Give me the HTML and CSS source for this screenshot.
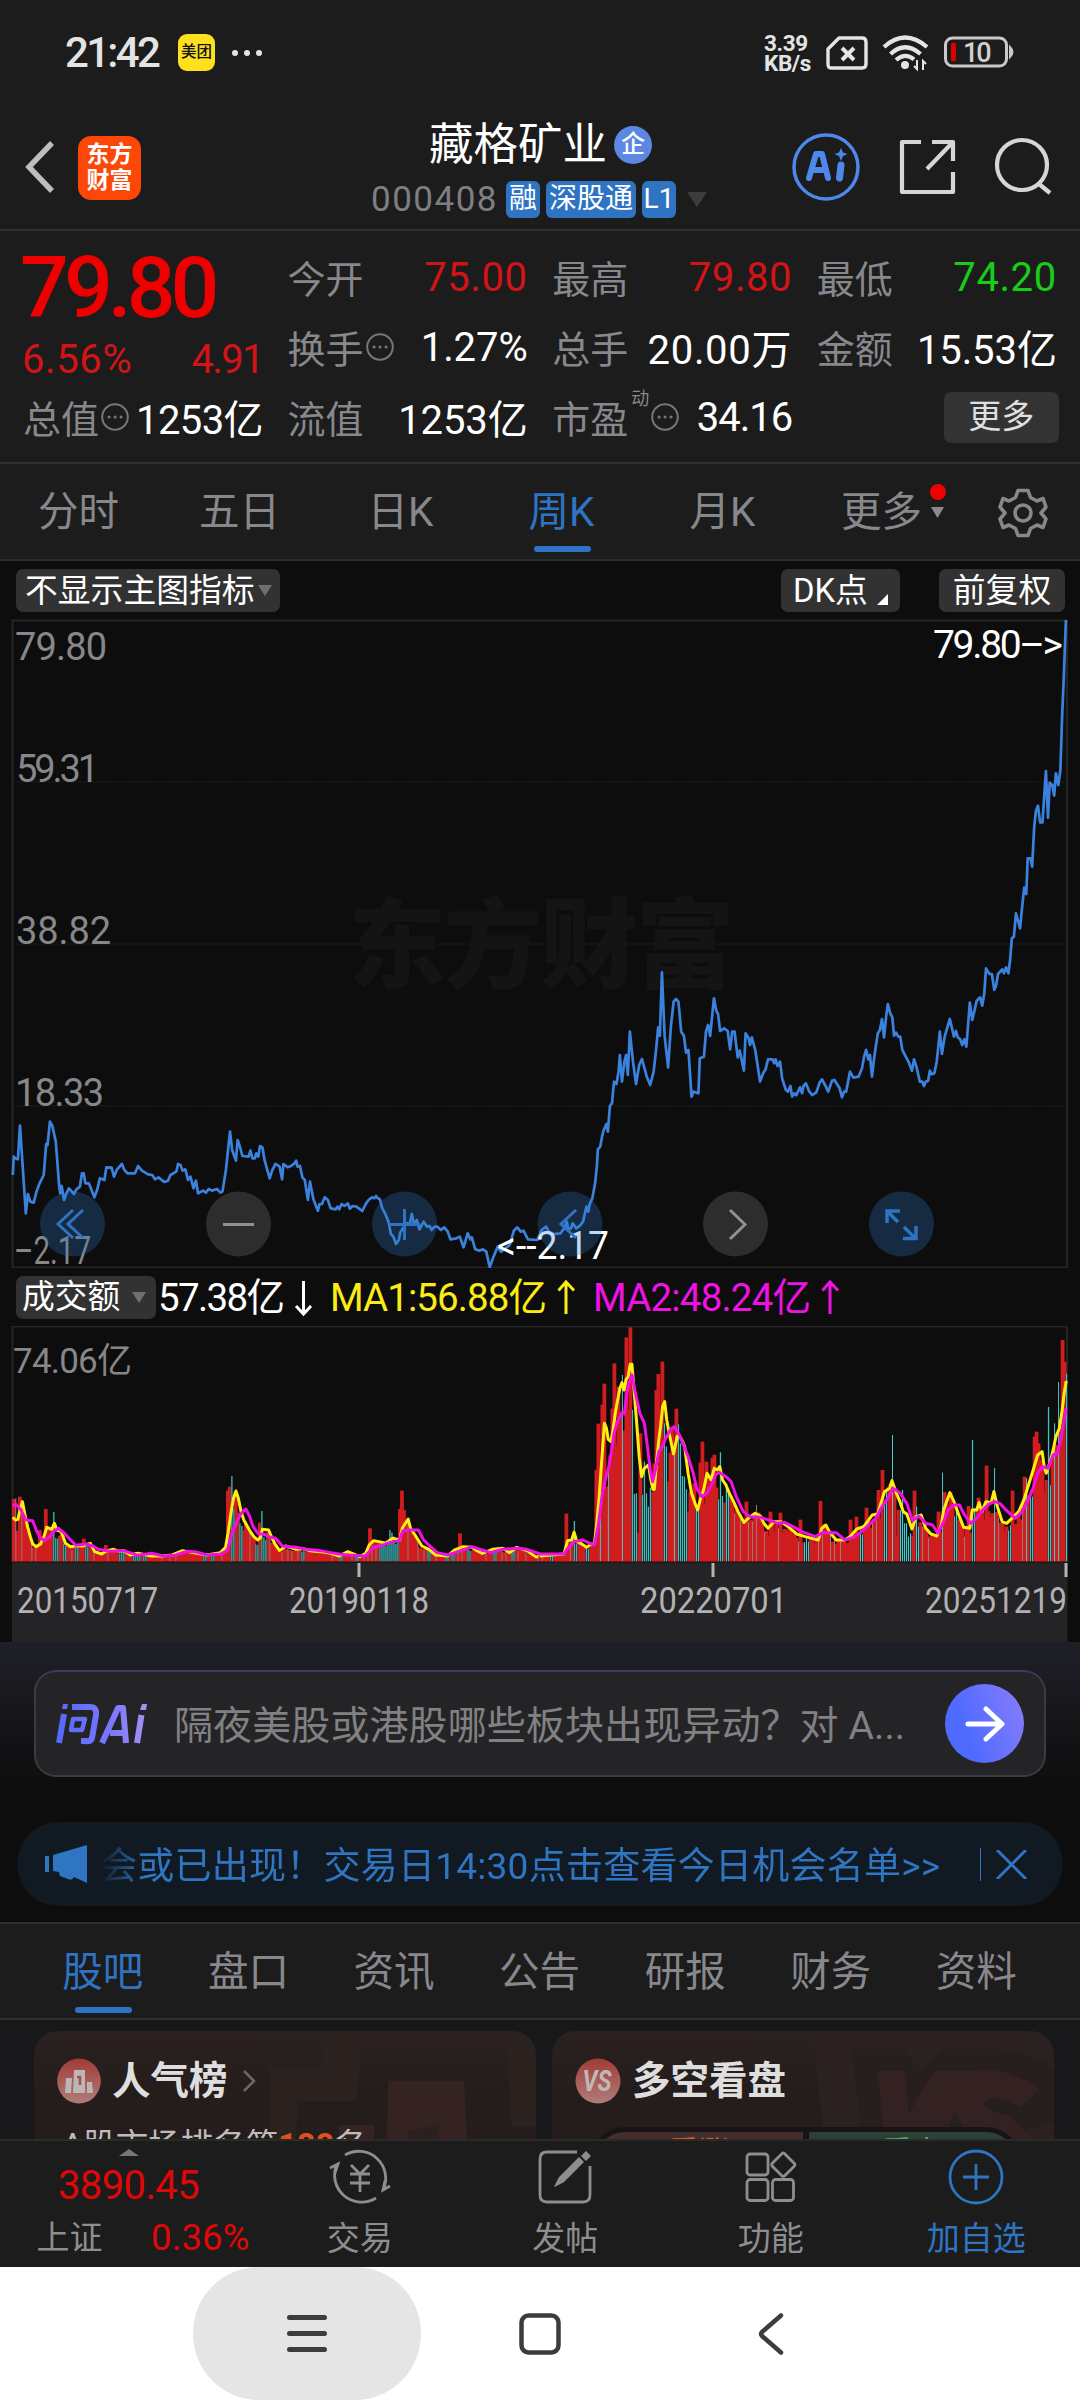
FILE: index.html
```html
<!DOCTYPE html>
<html lang="zh-CN">
<head>
<meta charset="utf-8">
<title>藏格矿业 000408</title>
<link rel="stylesheet" href="styles.css">
</head>
<body>
<div class="status">
  <span class="clock">21:42</span>
  <span class="mt">美团</span>
  <svg class="dots" width="32" height="8" viewBox="0 0 32 8"><circle cx="4" cy="4" r="3"/><circle cx="16" cy="4" r="3"/><circle cx="28" cy="4" r="3"/></svg>
  <span class="speed"><b>3.39</b><b>KB/s</b></span>
  <svg class="sys" width="190" height="38" viewBox="0 0 190 38">
    <path d="M13 4H36Q40 4 40 8V30Q40 34 36 34H5Q2 34 2 30V15Z" fill="none" stroke="#e4e4e4" stroke-width="3.4" stroke-linejoin="round"/>
    <path d="M16 14L28 26M28 14L16 26" stroke="#e4e4e4" stroke-width="4"/>
    <g fill="none" stroke="#e4e4e4" stroke-width="4.2"><path d="M58 13Q79 -6 101 13"/><path d="M64.500 20Q79 6.500 94.500 20"/><path d="M70 26Q79 18 88 25.500"/></g>
    <circle cx="79" cy="31" r="4" fill="#e4e4e4"/><path d="M91 26V35L88 32M97 36V27L100 30" fill="none" stroke="#e4e4e4" stroke-width="2"/>
    <rect x="119.500" y="4" width="61" height="28" rx="7" fill="none" stroke="#c9c9c9" stroke-width="3"/>
    <path d="M184 13Q189 18 184 23Z" fill="#c9c9c9" stroke="#c9c9c9" stroke-width="2"/>
    <rect x="125" y="8.500" width="5" height="19" rx="2" fill="#e00000"/>
    <text x="137" y="27.500" class="batt">10</text>
  </svg>
</div>

<header class="head">
  <svg class="back" width="32" height="54" viewBox="0 0 32 54"><path d="M28 3L5 27L28 51" fill="none" stroke="#bdbdc0" stroke-width="5.500"/></svg>
  <div class="logo"><span>东方</span><span>财富</span></div>
  <div class="name">
    <div class="title">藏格矿业<i>企</i></div>
    <div class="code"><span>000408</span><em>融</em><em>深股通</em><em>L1</em><svg width="20" height="15"><path d="M0 0H20L10 15Z" fill="#3c3c3c"/></svg></div>
  </div>
  <svg class="tools" width="264" height="70" viewBox="0 0 264 70">
    <circle cx="34" cy="35" r="32" fill="none" stroke="#4d88ea" stroke-width="3.500"/>
    <path d="M17 46L24 22H30L36 46M20 38H33" fill="none" stroke="#4d88ea" stroke-width="6" stroke-linejoin="round" stroke-linecap="round"/>
    <path d="M49 33L47.500 46" stroke="#4d88ea" stroke-width="7" stroke-linecap="round"/><path d="M49 16L51 20.500L55.500 22L51 24L49 29L47 24L42.500 22L47 20.500Z" fill="#4d88ea"/>
    <g fill="none" stroke="#d6d6d8" stroke-width="4.200" stroke-linejoin="round"><path d="M129 10H110V60H161V40M161 29V10H140M160 11L135 37"/><circle cx="230" cy="33" r="25"/><path d="M247 52L258 61"/></g>
  </svg>
</header>

<section class="quote">
  <div class="col first">
    <div class="price">79.80</div>
    <div class="chg"><span>6.56%</span><span>4.91</span></div>
    <div class="row total"><label>总值</label><svg class="info" viewBox="0 0 28 28"><circle cx="14" cy="14" r="12.800"/><path d="M8 14h.1M14 14h.1M20 14h.1"/></svg><b>1253亿</b></div>
  </div>
  <div class="col">
    <div class="row"><label>今开</label><b class="red">75.00</b></div>
    <div class="row"><label>换手</label><svg class="info" viewBox="0 0 28 28"><circle cx="14" cy="14" r="12.800"/><path d="M8 14h.1M14 14h.1M20 14h.1"/></svg><b>1.27%</b></div>
    <div class="row"><label>流值</label><b>1253亿</b></div>
  </div>
  <div class="col">
    <div class="row"><label>最高</label><b class="red">79.80</b></div>
    <div class="row"><label>总手</label><b class="wide">20.00万</b></div>
    <div class="row"><label>市盈</label><sup>动</sup><svg class="info" viewBox="0 0 28 28"><circle cx="14" cy="14" r="12.800"/><path d="M8 14h.1M14 14h.1M20 14h.1"/></svg><b class="tight">34.16</b></div>
  </div>
  <div class="col">
    <div class="row"><label>最低</label><b class="green">74.20</b></div>
    <div class="row"><label>金额</label><b>15.53亿</b></div>
    <div class="row"><span class="more">更多</span></div>
  </div>
</section>

<nav class="periods">
  <span>分时</span><span>五日</span><span>日K</span><span class="on">周K</span><span>月K</span>
  <span class="drop">更多<svg width="18" height="44" viewBox="0 0 18 44"><circle cx="9" cy="8" r="8" fill="#ee0000"/><path d="M2 23H15L8.500 34Z" fill="#8a8a8d"/></svg></span>
  <svg class="gear" width="50" height="50" viewBox="-25 -25 50 50"><path d="M-5 -22.500H5L7.500 -15.500L14 -12L20 -14.500L23 -6L18 0L23 6L20 14.500L14 12L7.500 15.500L5 22.500H-5L-7.500 15.500L-14 12L-20 14.500L-23 6L-18 0L-23 -6L-20 -14.500L-14 -12L-7.500 -15.500Z"/><circle r="8"/></svg>
</nav>

<section class="chart">
  <div class="bar">
    <span class="chip main">不显示主图指标<svg width="14" height="11"><path d="M0 0H14L7 11Z" fill="#707070"/></svg></span>
    <span class="chip dk">DK点<svg width="11" height="11"><path d="M11 0V11H0Z" fill="#fff"/></svg></span>
    <span class="chip fq">前复权</span>
  </div>
  <div class="plot">
    <svg width="1080" height="650" viewBox="0 618 1080 650">
      <g class="frame"><path d="M12.500 1268V620.500H1067V1267.500H12.500"/><path class="grid" d="M13 782H1067M13 944H1067M13 1106H1067"/></g>
      <text class="wm" x="348" y="980" textLength="386">东方财富</text>
      <g class="axis"><text x="15" y="660" textLength="92">79.80</text><text x="16" y="782" textLength="83">59.31</text><text x="16" y="944" textLength="95">38.82</text><text x="15" y="1106" textLength="89">18.33</text><text x="14" y="1264" textLength="77" lengthAdjust="spacingAndGlyphs">–2.17</text></g>
      <g class="line" transform="translate(0 1040) scale(.3444 .3333)"><polyline points="37,405 40,350 44,355 52,358 58,257 75,520 81,462 88,485 98,488 106,455 115,430 127,405 134,312 138,315 145,245 152,258 162,305 172,440 175,460 179,438 186,480 193,460 200,445 215,462 222,448 232,440 238,400 243,400 248,430 258,430 274,472 282,450 290,415 303,420 309,382 324,383 331,410 340,388 354,372 360,388 370,400 392,400 401,378 412,392 430,403 442,405 450,418 460,412 477,426 488,422 495,405 512,395 517,372 524,375 530,392 538,388 546,420 553,410 562,445 569,422 575,460 590,452 598,458 606,447 615,452 630,447 640,458 646,455 656,390 662,330 668,275 674,330 685,362 690,300 696,318 704,348 722,350 727,332 733,355 740,355 744,340 750,350 755,318 762,322 768,360 783,415 790,392 800,372 812,380 819,418 823,372 835,382 845,378 855,370 860,362 864,380 871,378 878,412 885,420 894,480 900,425 910,478 923,512 928,492 935,492 943,472 952,480 960,505 975,508 980,500 985,508 992,492 1000,498 1010,490 1016,506 1024,498 1035,500 1052,513 1062,492 1070,480 1080,472 1087,475 1092,468 1097,475 1103,478 1110,505 1118,520 1128,545 1135,582 1142,590 1150,612 1158,600 1162,578 1170,565 1180,550 1190,550 1196,522 1202,555 1210,540 1218,568 1230,545 1240,560 1247,558 1253,570 1262,560 1270,560 1280,570 1290,562 1300,575 1308,598 1325,595 1335,590 1346,622 1358,580 1366,598 1370,592 1380,628 1392,632 1402,628 1412,635 1422,682 1433,650 1445,620 1455,635 1480,615 1492,572 1502,562 1512,575 1520,572 1533,598 1560,600 1573,570"/></g>
      <g class="line" transform="translate(540 950) scale(.3444 .3333)"><polyline points="0,850 5,840 18,830 25,845 40,852 60,850 70,835 78,815 82,838 90,835 95,820 105,835 115,828 125,815 135,770 140,785 145,760 152,745 160,700 165,650 168,598 175,590 180,560 185,540 193,522 197,545 203,468 209,460 215,395 222,402 228,365 232,315 238,395 245,335 250,315 255,375 261,245 270,335 279,402 288,345 296,327 310,380 320,405 330,365 337,300 343,232 348,258 354,67 362,260 372,352 380,230 388,155 395,147 402,155 410,245 418,258 424,308 431,300 440,440 446,425 460,430 464,325 476,320 482,245 488,225 494,258 505,145 512,183 517,192 523,243 535,235 545,243 552,298 558,245 565,245 574,322 580,302 592,362 597,250 605,263 610,285 615,262 625,300 639,395 648,370 655,358 662,328 675,328 680,340 684,328 690,348 697,335 703,385 714,420 720,425 727,408 732,440 738,430 744,436 755,412 761,430 765,408 772,400 782,425 790,435 802,428 812,398 819,388 830,410 837,425 848,392 855,390 870,415 877,442 883,425 889,425 900,365 910,383 925,380 935,355 941,320 947,300 953,328 958,315 964,380 970,325 975,290 981,250 987,240 993,207 999,262 1005,200 1010,162 1017,190 1023,202 1028,257 1034,248 1040,260 1046,260 1052,300 1062,320 1070,335 1080,362 1086,328 1093,350 1103,395 1110,395 1115,408 1120,395 1127,392 1132,362 1138,373 1145,370 1152,335 1161,245 1167,312 1175,260 1190,207 1202,260 1208,243 1213,262 1220,268 1226,285 1232,268 1238,290 1248,158 1255,210 1262,180 1268,152 1278,142 1284,167 1290,130 1295,55 1305,72 1312,72 1319,120 1324,108 1330,72 1342,58 1347,70 1353,52 1360,70 1365,30 1370,-35 1376,-40 1382,-110 1394,-65 1400,-130 1406,-187 1412,-168 1416,-275 1424,-275 1429,-250 1435,-370 1440,-417 1446,-433 1452,-383 1459,-383 1464,-460 1469,-537 1475,-397 1480,-502 1487,-495 1493,-463 1498,-530 1505,-495 1511,-540 1516,-700 1521,-820 1527,-990"/></g>
      <g class="mark"><text x="933" y="658" textLength="130">79.80–&gt;</text><text x="497" y="1259" textLength="112" lengthAdjust="spacingAndGlyphs">&lt;--2.17</text></g>
      <g class="btns">
        <g fill="#2e79c8" fill-opacity=".28"><circle cx="72.500" cy="1224" r="32.500"/><circle cx="404.500" cy="1224" r="32.500"/><circle cx="570" cy="1224" r="32.500"/><circle cx="901.500" cy="1224" r="32.500"/></g>
        <g fill="#2d2d2d"><circle cx="238.500" cy="1224" r="32.500"/><circle cx="735.500" cy="1224" r="32.500"/></g>
        <g fill="none" stroke="#2f74c0" stroke-width="3"><path d="M73 1210L58 1224L73 1238M83 1210L68 1224L83 1238M389 1224.500H420M404.500 1209V1240M576 1210L561 1224L576 1238"/><path d="M887 1223V1211H900M888 1212L898 1222M904 1227L914 1237M916 1226V1238.500H903" stroke-width="3.500"/></g>
        <g fill="none" stroke="#919194" stroke-width="3"><path d="M223 1224.500H254M730 1210L745 1224.500L730 1239"/></g>
      </g>
    </svg>
  </div>
  <div class="vbar">
    <span class="chip amt">成交额<svg width="14" height="11"><path d="M0 0H14L7 11Z" fill="#707070"/></svg></span>
    <svg width="700" height="58" viewBox="156 1268 700 58">
      <g fill="#fff" stroke="#fff"><text x="158" y="1311" textLength="127">57.38亿</text><path d="M303.500 1281V1313M296 1306L303.500 1314L311 1306"/></g>
      <g fill="#fbec15" stroke="#fbec15"><text x="330" y="1311" textLength="217">MA1:56.88亿</text><path d="M566 1314V1283M558.500 1290.500L566 1282L574 1290.500"/></g>
      <g fill="#ee12e4" stroke="#ee12e4"><text x="593" y="1311" textLength="218">MA2:48.24亿</text><path d="M830 1314V1283M822.500 1290.500L830 1282L838 1290.500"/></g>
    </svg>
  </div>
  <svg class="vol" width="1080" height="316" viewBox="0 1326 1080 316">
    <rect x="12" y="1562.500" width="1055.500" height="79.500" fill="#242426"/>
    <g class="frame"><path d="M12.500 1562V1326.500H1067V1562"/></g>
    <g class="axis small"><text x="13" y="1373" textLength="119">74.06亿</text></g>
    <g id="v1" transform="translate(0 1310) scale(.3444 .3333)"><g></g>
      <polyline class="ma1" points="37,622 45,630 52,628 58,600 65,575 72,612 80,650 88,680 95,702 105,710 118,702 128,678 136,652 150,658 158,640 165,660 178,665 190,700 205,710 220,708 240,708 262,700 275,725 295,732 310,722 330,718 345,724 360,722 378,735 400,730 440,738 470,738 500,735 530,722 560,728 600,735 640,728 655,712 662,670 672,600 678,565 685,543 692,565 700,605 708,630 725,662 737,680 748,690 755,685 762,658 780,660 790,685 800,705 812,722 830,708 860,718 880,716 900,722 930,725 960,730 985,738 1010,725 1045,740 1062,730 1072,705 1085,692 1100,695 1120,700 1140,685 1160,690 1168,655 1185,627 1192,655 1205,675 1225,708 1245,718 1265,735 1300,738 1320,720 1345,710 1370,712 1385,722 1400,730 1430,718 1460,715 1480,728 1500,712 1530,722 1555,740 1568,740"/>
      <polyline class="ma2" points="37,588 45,582 60,598 75,630 95,632 105,660 115,680 128,692 145,680 155,665 170,655 185,668 205,690 220,706 250,702 270,708 285,718 320,724 360,722 400,736 440,730 475,738 510,735 545,724 570,726 600,735 640,732 660,722 675,665 690,630 700,610 714,597 725,620 735,650 750,672 765,672 780,680 800,685 820,708 840,710 860,712 890,718 930,722 960,728 985,732 1010,735 1060,738 1085,712 1110,706 1130,698 1158,692 1170,662 1190,660 1215,660 1230,690 1250,710 1270,728 1300,735 1340,722 1370,710 1400,720 1425,728 1460,718 1500,715 1530,718 1568,732"/></g>
    <g id="v2" transform="translate(540 1310) scale(.3444 .3333)"><g></g>
      <polyline class="ma1" points="0,738 70,732 80,692 92,690 99,667 107,695 118,700 135,712 150,702 158,700 165,640 172,560 180,440 187,340 193,355 198,388 206,395 212,360 220,300 232,235 238,218 244,240 250,208 256,200 262,163 267,163 273,240 280,330 288,440 295,500 303,475 315,465 322,510 328,538 332,538 338,460 345,390 350,350 356,290 362,275 368,330 375,370 388,432 398,380 403,375 412,390 420,410 430,490 440,550 450,580 458,600 465,570 475,540 485,490 497,510 506,475 515,480 522,470 530,510 540,525 550,550 562,575 575,605 592,637 605,625 625,610 640,618 650,640 662,655 680,635 700,635 720,650 745,672 770,680 808,690 818,655 830,645 840,665 860,690 885,690 900,680 920,657 940,650 965,615 980,612 990,580 1000,545 1015,535 1022,512 1035,550 1045,575 1055,605 1065,612 1080,657 1092,620 1107,615 1120,655 1135,672 1152,678 1165,645 1172,600 1190,548 1202,575 1215,612 1230,652 1248,655 1255,600 1268,600 1275,578 1283,605 1295,575 1310,578 1318,545 1328,590 1342,635 1355,640 1370,625 1390,605 1405,570 1420,520 1432,480 1445,435 1458,425 1464,470 1470,490 1480,460 1490,420 1498,380 1508,355 1515,310 1522,250 1528,213"/>
      <polyline class="ma2" points="0,732 70,732 80,715 100,695 125,690 145,700 158,705 170,640 180,560 188,515 200,470 208,420 215,370 225,335 238,308 245,312 252,250 260,215 267,195 275,240 290,310 303,340 312,410 320,480 327,515 335,480 345,425 355,410 365,385 378,360 390,350 405,375 415,400 430,440 445,490 455,535 470,560 485,550 500,520 510,495 520,487 540,500 555,515 570,560 590,605 610,620 640,622 670,632 690,640 710,637 735,650 760,665 800,680 820,668 860,668 885,690 910,682 930,668 950,650 975,625 990,595 1010,565 1025,535 1045,548 1065,580 1082,632 1100,618 1120,640 1140,645 1155,670 1170,640 1185,600 1200,585 1218,585 1230,610 1250,640 1268,625 1285,600 1305,582 1320,575 1335,580 1355,602 1380,625 1400,605 1415,575 1430,540 1445,490 1458,470 1475,475 1490,435 1502,430 1512,390 1520,340 1528,295"/></g>
    <path d="M359 1563V1577M713 1563V1577M1066 1563V1577" stroke="#b4b4b4" stroke-width="3"/>
    <g class="dates"><text x="17" y="1613" textLength="141" lengthAdjust="spacingAndGlyphs">20150717</text><text x="289" y="1613" textLength="140" lengthAdjust="spacingAndGlyphs">20190118</text><text x="640" y="1613" textLength="147" lengthAdjust="spacingAndGlyphs">20220701</text><text x="925" y="1613" textLength="142" lengthAdjust="spacingAndGlyphs">20251219</text></g>
  </svg>
</section>

<section class="ask">
  <div class="askbox">
    <svg width="94" height="44" viewBox="0 0 94 44"><defs><linearGradient id="lg" gradientUnits="userSpaceOnUse" x1="0" x2="94" y1="0" y2="0"><stop offset="0" stop-color="#5468fb"/><stop offset=".6" stop-color="#7c78fb"/><stop offset="1" stop-color="#a793f6"/></linearGradient></defs>
      <g fill="none" stroke="url(#lg)" stroke-width="6" stroke-linejoin="round"><path d="M8 12L3 41M16 5H34Q41 5 40 13L36 36Q35 40 29 39H25"/><path d="M17 17H29L26 28H15Z" stroke-width="4.500"/><path d="M46 41L62 6H67L70 41M54 31H69M85.500 13L81 41"/></g><path d="M7 2h5l-1 5h-5zM86 2h5l-1 6h-6z" fill="url(#lg)"/></svg>
    <p>隔夜美股或港股哪些板块出现异动？对 A...</p>
    <span class="go"><svg width="40" height="38" viewBox="0 0 40 38"><path d="M3 19H36M21 4L37 19L21 34" fill="none" stroke="#fff" stroke-width="5" stroke-linecap="round" stroke-linejoin="round"/></svg></span>
  </div>
  <div class="notice">
    <svg width="43" height="38" viewBox="0 0 43 38"><path d="M0 11H4V27H0ZM8 10L42 0V38L29 32Q27 36 23 34L15 31L14 27L8 26Z" fill="#2f75c1"/></svg>
    <p>会或已出现！交易日14:30点击查看今日机会名单&gt;&gt;</p>
    <i></i>
    <svg width="31" height="29" viewBox="0 0 31 29"><path d="M1 0L30 29M30 0L1 29" stroke="#2f75c1" stroke-width="3"/></svg>
  </div>
</section>

<nav class="tabs"><span class="on">股吧</span><span>盘口</span><span>资讯</span><span>公告</span><span>研报</span><span>财务</span><span>资料</span></nav>

<section class="cards">
  <div class="card">
    <svg class="bg" width="502" height="108" viewBox="0 0 502 108"><path d="M236 108V36H288L290 0H502V96H478L472 16H328L322 70H264L262 108Z" fill="#2b2220"/><path d="M354 50H430L433 108H353ZM305 94H340V108H305Z" fill="#352322"/><path d="M374 100L404 94V108H374Z" fill="#2a2020"/></svg>
    <div class="ct"><svg width="44" height="46" viewBox="0 0 44 46"><defs><linearGradient id="rg" x2="0" y2="1"><stop stop-color="#a03c37"/><stop offset="1" stop-color="#b07c79"/></linearGradient></defs><ellipse cx="22" cy="23" rx="21.800" ry="22.500" fill="url(#rg)"/><path d="M9 20H15L14 35H8ZM17 12H28V35H16ZM30 24H35L36 35H30Z" fill="#bdb6b6"/><path d="M20 19H23V27" fill="none" stroke="#a1524e" stroke-width="2.500"/></svg><strong>人气榜</strong><svg width="13" height="24" viewBox="0 0 13 24"><path d="M1 2L11 12L1 22" fill="none" stroke="#6c6665" stroke-width="2.500"/></svg></div>
    <p class="rank">A股市场排名第<b>188</b>名</p>
  </div>
  <div class="card">
    <svg class="bg" width="502" height="108" viewBox="0 0 502 108"><path d="M260 0H502V108H272Z" fill="#2b2120"/><path d="M300 18L350 18L370 40L390 18H440Q490 22 502 40V90L450 108H310Z" fill="#271e1e"/><path d="M325 40H353L357 82L382 40H425Q450 34 488 58L468 76Q440 60 432 72Q430 78 460 86L480 108H420L403 82L390 108H333Z" fill="#332221"/></svg>
    <div class="ct vs"><svg width="46" height="46" viewBox="0 0 46 46"><circle cx="23" cy="23" r="22.500" fill="url(#rg)"/><text x="22" y="33" text-anchor="middle" textLength="29" lengthAdjust="spacingAndGlyphs">VS</text></svg><strong>多空看盘</strong></div>
    <div class="duel"><span class="up">看涨</span><span class="down">看空</span></div>
  </div>
</section>

<footer class="dock">
  <div class="index"><svg width="20" height="7"><path d="M0 7L10 0L20 7Z" fill="#77777a"/></svg><span class="pt">3890.45</span><div><span>上证</span><span class="pc">0.36%</span></div></div>
  <div class="item"><svg width="62" height="58" viewBox="-31 -29 62 58"><path d="M-15 -22A27 27 0 0 1 23 13M16 21A27 27 0 0 1 -23 -13M-30 -9L-22 -13L-25 -4M30 9L23 13L25 4M-9 -12L0 -3L9 -12M0 -3V15M-10 -3H10M-10 6H10"/></svg>交易</div>
  <div class="item"><svg width="62" height="58" viewBox="-31 -29 62 58"><path d="M12 -25H-18Q-25 -25 -25 -18V18Q-25 25 -18 25H18Q25 25 25 18V-11"/><path d="M-8 7L-5 1L14 -18L17 -15L-2 4ZM18 -21L21 -24L24 -21L21 -18Z" fill="#8e8e91"/></svg>发帖</div>
  <div class="item"><svg width="62" height="58" viewBox="-31 -29 62 58"><rect x="-24" y="-23" width="21" height="21" rx="3"/><rect x="-24" y="2.500" width="21" height="21" rx="3"/><rect x="1.500" y="2.500" width="21" height="21" rx="3"/><rect x="3.500" y="-21" width="17.500" height="17.500" rx="2" transform="rotate(45 12.250 -12.250)"/></svg>功能</div>
  <div class="item add"><svg width="62" height="58" viewBox="-31 -29 62 58"><circle r="26"/><path d="M-13 0H13M0 -13V13"/></svg>加自选</div>
</footer>

<div class="sysnav">
  <span class="pill"><svg width="40" height="42" viewBox="0 0 40 42"><path d="M2.500 4.500H37.500M2.500 20.500H37.500M2.500 36.500H37.500" stroke="#3c3c3c" stroke-width="5" stroke-linecap="round"/></svg></span>
  <svg width="42" height="42" viewBox="0 0 42 42"><rect x="2.500" y="2.500" width="37" height="37" rx="7" fill="none" stroke="#3c3c3c" stroke-width="4.500"/></svg>
  <svg width="26" height="42" viewBox="0 0 26 42"><path d="M23 2.500L4 19Q2 21 4 23L23 39.500" fill="none" stroke="#3c3c3c" stroke-width="4.500" stroke-linecap="round"/></svg>
</div>
<script src="script.js"></script>
</body>
</html>
```
FILE: styles.css
```css
* { box-sizing: border-box; }
body { margin: 0; width: 1080px; height: 2400px; overflow: hidden; background: #1c1c1c; color: #fff; font-family: Roboto, "Noto Sans CJK SC", sans-serif; }
svg { display: block; flex: none; }
p { margin: 0; }
b, i, em, label { font-weight: 400; font-style: normal; }

.status { height: 105px; display: flex; align-items: center; padding: 0 64px 0 65px; color: #e4e4e4; }
.clock { font-size: 42px; font-weight: 500; width: 113px; letter-spacing: -2.7px; }
.mt { width: 37px; height: 37px; border-radius: 9px; background: #ffe01f; color: #111; font-size: 15.5px; font-weight: 500; line-height: 36px; text-align: center; }
.dots { margin-left: 16px; fill: #e4e4e4; }
.speed { margin-left: auto; width: 57px; font-size: 22.500px; }
.speed b { display: block; font-weight: 700; letter-spacing: -.4px; height: 20px; line-height: 20px; }
.sys { margin-left: 5px; width: 190px; }
.batt { font: 500 27px Roboto, sans-serif; fill: #d0d0d0; letter-spacing: -2px; }

.head { height: 126px; display: flex; align-items: flex-start; border-bottom: 2px solid #303030; }
.back { margin: 35px 0 0 24px; }
.logo { margin: 31px 0 0 22px; width: 63px; height: 64px; border-radius: 13px; background: #fc4708; display: flex; flex-direction: column; align-items: center; justify-content: center; font-size: 23px; line-height: 26px; font-weight: 700; }
.name { margin-left: 230px; width: 345px; padding-top: 12px; }
.title { display: flex; align-items: center; margin-left: 58px; font-size: 44.5px; line-height: 54px; height: 54px; padding-top: 2px; }
.title i { width: 38px; height: 38px; border-radius: 50%; background: #5c88e4; font-size: 24px; line-height: 36px; text-align: center; font-weight: 500; margin-left: 7px; }
.code { display: flex; align-items: center; height: 38px; margin-top: 9px; white-space: nowrap; }
.code span { font-size: 35px; color: #7f7f83; letter-spacing: 1.5px; width: 135px; flex: none; }
.code em { background: #2e74c3; border-radius: 6px; height: 37px; line-height: 35px; font-size: 28px; width: 34px; text-align: center; margin-right: 6px; flex: none; }
.code em:nth-child(3) { width: 90px; }
.code svg { margin-left: 5px; }
.tools { margin: 27px 0 0 76px; }

.quote { height: 233px; border-bottom: 2px solid #303030; padding: 11px 24px 0 23px; display: grid; grid-template-columns: repeat(4, 240px); column-gap: 24.600px; font-size: 40px; }
.row { height: 70px; display: flex; align-items: center; }
.row label { color: #88888c; font-size: 38px; position: relative; top: -1px; }
.row b { margin-left: auto; white-space: nowrap; letter-spacing: -.1px; }
.row .red, .row .green { letter-spacing: .6px; }
.row .wide { letter-spacing: .7px; }
.row .tight { letter-spacing: -1px; }
.row sup { font-size: 18px; line-height: 20px; color: #88888c; align-self: flex-start; margin: 7px 0 0 3px; }
.info { width: 28px; height: 28px; margin-left: 2px; fill: none; stroke: #77777a; stroke-width: 2; }
.info path { stroke-width: 3; stroke-linecap: round; }
.red { color: #d21416; } .green { color: #17cd17; }
.price { color: #ee0000; font-size: 86px; font-weight: 500; height: 90px; line-height: 92px; letter-spacing: -5px; margin-left: -3px; }
.chg { height: 52px; display: flex; align-items: center; justify-content: space-between; color: #d21416; font-size: 40px; letter-spacing: .6px; margin-left: -1px; padding-top: 2px; }
.chg span:last-child { letter-spacing: -1.600px; }
.first .total { height: 66px; }
.total b { letter-spacing: -.6px; }
.more { margin-left: auto; width: 115px; height: 51px; border-radius: 7px; background: #333; color: #e0e0e0; font-size: 33px; line-height: 49px; text-align: center; margin-right: -2px; }

.periods { height: 97px; border-bottom: 2px solid #2a2a2a; display: grid; grid-template-columns: repeat(6, 161px) 118px; margin-left: -2px; font-size: 40.500px; color: #88888c; text-align: center; line-height: 97px; }
.periods .on { color: #2e74c3; position: relative; }
.on::after { content: ""; position: absolute; left: 50%; margin-left: -28px; width: 57px; height: 6px; border-radius: 3px; background: #2e74c3; }
.periods .on::after { bottom: 9px; }
.drop { display: flex; justify-content: center; padding-left: 21px; }
.drop svg { margin: 20px 0 0 7px; }
.gear { align-self: center; justify-self: center; fill: none; stroke: #88888c; stroke-width: 3.6; stroke-linejoin: round; }

.chart { background: #0d0d0d; }
.bar { height: 57px; padding: 8px 15px 0 16px; display: flex; }
.chip { height: 43px; border-radius: 7px; background: #323232; font-size: 32.800px; line-height: 42px; display: flex; align-items: center; white-space: nowrap; }
.main { width: 264px; padding-left: 9px; }
.main svg { margin-left: 3px; }
.dk { margin-left: auto; width: 119px; padding-left: 12px; }
.dk svg { margin: 17px 0 0 9px; }
.fq { margin-left: 39px; width: 126px; justify-content: center; }
.frame { fill: none; stroke: #252525; stroke-width: 2; }
.grid { stroke-width: 1.200; stroke-dasharray: 1.500 1; }
.wm { font: 900 98px "Noto Sans CJK SC", sans-serif; fill: #141414; }
.axis { font-size: 38px; fill: #87878a; }
.small { font-size: 35px; }
.line polyline { fill: none; stroke: #3a82dd; stroke-width: 2.700; vector-effect: non-scaling-stroke; stroke-linejoin: round; }
.mark { font-size: 39px; fill: #fff; }
.vbar { height: 58px; display: flex; align-items: center; }
.vbar text { font-size: 38.500px; stroke: none; }
.vbar path { fill: none; stroke-width: 3; }
.vbar .chip path { stroke: none; fill: #707070; }
.amt { width: 140px; margin-left: 16px; padding-left: 6px; }
.amt svg { margin-left: 12px; }
.ma1, .ma2 { fill: none; stroke: #ffee10; stroke-width: 3; vector-effect: non-scaling-stroke; stroke-linejoin: round; }
.ma2 { stroke: #f010e4; }
.dates { font-size: 36px; fill: #b2b2b4; }

.ask { height: 280px; padding: 28px 17px 0; background: linear-gradient(#1f1f27, #0d0d0d 150px); }
.askbox { margin: 0 17px; height: 107px; border-radius: 22px; background: #242426; border: 2px solid #3b3b42; border-top-color: #3b3a5e; display: flex; align-items: center; padding: 0 20px; }
.askbox p { margin-left: 24px; width: 771px; font-size: 39px; color: #818184; white-space: nowrap; letter-spacing: .1px; padding-bottom: 4px; }
.go { width: 79px; height: 79px; border-radius: 50%; background: linear-gradient(70deg, #4f6bff 30%, #8c7dfb); display: flex; align-items: center; justify-content: center; }
.notice { margin-top: 45px; height: 84px; border-radius: 42px; background: #111a23; display: flex; align-items: center; padding: 0 36px 0 28px; color: #2f75c1; }
.notice p { margin-left: 12px; width: 842px; font-size: 37px; letter-spacing: .25px; padding-bottom: 3px; white-space: nowrap; -webkit-mask-image: linear-gradient(90deg, transparent, #000 45px); mask-image: linear-gradient(90deg, transparent, #000 45px); }
.notice i { width: 1px; height: 33px; background: #2f75c1; margin: 0 15px 0 38px; }

.tabs { height: 98px; border-top: 2px solid #303030; border-bottom: 2px solid #303030; padding: 0 30px; display: grid; grid-template-columns: repeat(7, 145.600px); text-align: center; font-size: 40.500px; line-height: 96px; color: #88888c; }
.tabs .on { color: #2e74c3; position: relative; }
.tabs .on::after { bottom: 7px; }
.cards { height: 119px; overflow: hidden; background: #18181a; padding: 11px 26px 0 34px; display: grid; grid-template-columns: 502px 502px; column-gap: 16px; }
.card { height: 200px; border-radius: 24px; background: linear-gradient(#2a2120, #251c1c 60px); overflow: hidden; position: relative; }
.bg { position: absolute; top: 0; left: 0; }
.ct { display: flex; align-items: center; height: 46px; margin: 27px 0 0 23px; position: relative; }
.ct strong { font-size: 38.500px; font-weight: 700; color: #dedede; margin: 0 15px 0 11px; line-height: 46px; }
.ct text { font: italic 700 29px Roboto, sans-serif; fill: #c0b8b8; }
.rank { position: relative; margin: 20px 0 0 28px; font-size: 32.500px; line-height: 44px; color: #c0bcbb; white-space: nowrap; }
.rank b { color: #e0501c; font-weight: 700; }
.duel { position: relative; margin: 23px 33px 0 38px; height: 70px; border-radius: 35px; border: 5px solid #181415; display: flex; gap: 6px; overflow: hidden; background: #181415; font-size: 30px; line-height: 40px; text-align: center; }
.up { flex: 1; background: #442e2d; color: #dc5a26; } .down { flex: 1; background: #2d4036; color: #49a86b; }

.dock { height: 128px; border-top: 2px solid #2a2a2a; display: flex; color: #8e8e91; font-size: 33px; }
.index { width: 257px; display: flex; flex-direction: column; align-items: center; padding-top: 8px; }
.pt { font-size: 40px; line-height: 46px; color: #df0808; margin-top: 7px; letter-spacing: -.6px; }
.index div { width: 213px; margin-left: 29px; display: flex; justify-content: space-between; align-items: center; height: 46px; margin-top: 6px; line-height: 46px; }
.pc { color: #df0808; font-size: 36.500px; letter-spacing: .1px; }
.item { width: 205.500px; display: flex; flex-direction: column; align-items: center; padding-top: 7px; line-height: 46px; }
.item svg { margin-bottom: 10px; fill: none; stroke: #8e8e91; stroke-width: 2.800; }
.add { color: #2f75c1; } .item.add svg { stroke: #2f75c1; }
.sysnav { height: 133px; background: #fff; display: flex; align-items: center; padding-left: 193px; }
.pill { width: 228px; height: 133px; border-radius: 66px; background: #e5e5e5; display: flex; align-items: center; justify-content: center; margin-right: 98px; }
.sysnav > svg:last-child { margin-left: 197px; }
```
FILE: script.js
```js
// Weekly turnover bars: named peaks, the rest follows the short average.
const NS = "http://www.w3.org/2000/svg";
const BASE = 752, STEP = 5.81;
const RED = "#d01d1f", CYAN = "#4fc9c8", MUTED = "#a37a78";
const peaks1 = "42,567 46,565c 59,560 118,660 135,597 158,606c 164,684c 170,686c 241,686 308,705 660,542 668,530 676,498c 692,608 698,640c 704,648c 756,638 762,603c 774,690c 1075,655 1104,700c 1110,705c 1116,704c 1121,708c 1127,700c 1133,660c 1139,668c 1145,680c 1162,597 1168,542 1174,600 1336,670";
const peaks2 = "77,611 100,633c 164,480 170,341 181,284 187,221 193,530 210,296 216,160 228,230 239,195c 251,82 262,52 268,300c 274,552c 280,550c 285,668 291,370 303,455c 309,550c 315,590c 332,460 338,240 344,192 355,155 362,340c 367,410c 373,515 385,350 396,296 402,343c 408,400c 414,498c 420,500c 426,538c 432,605 449,520 466,458 472,395 483,455 501,443 506,434 518,568c 524,427c 530,558c 535,578 541,520c 600,575 628,585c 669,605 698,608 756,629 814,573 901,629 918,620 947,593 982,540 994,480 1023,375c 1034,678 1052,540c 1058,640c 1064,640c 1070,680c 1087,542 1093,590c 1157,605 1168,488c 1174,546 1202,620c 1243,588 1255,390c 1273,563 1296,467 1319,474c 1371,542 1406,500 1412,505c 1435,380 1441,365 1450,400 1458,465 1470,510 1476,291c 1494,340c 1500,405 1505,216c 1516,90 1525,155";
let seed = 7;
const rnd = () => (seed = (seed * 16807) % 2147483647) / 2147483647;

function draw(id, from, to, text) {
  const host = document.querySelector("#" + id + " > g");
  const ma = document.querySelector("#" + id + " .ma1").getAttribute("points").split(" ").map(p => p.split(",").map(Number));
  const peaks = text.split(" ").map(t => ({ x: parseFloat(t), y: parseFloat(t.split(",")[1]), down: t.endsWith("c") }));
  const avg = x => {
    let i = 1;
    while (i < ma.length - 1 && ma[i][0] < x) i++;
    const [a, b] = [ma[i - 1], ma[i]];
    return a[1] + (b[1] - a[1]) * Math.min(1, Math.max(0, (x - a[0]) / (b[0] - a[0])));
  };
  const bars = [];
  for (let x = from; x < to; x += STEP) {
    const p = peaks.find(q => Math.abs(q.x - x) < STEP / 2);
    const y = p ? p.y : BASE - (BASE - avg(x)) * (.72 + rnd() * .34);
    bars.push({ x, y, down: p ? p.down : rnd() < .3 });
  }
  const rect = (x, y, w, fill) => {
    const r = document.createElementNS(NS, "rect");
    r.setAttribute("x", x); r.setAttribute("y", y);
    r.setAttribute("width", w); r.setAttribute("height", BASE + 3 - y);
    r.setAttribute("fill", fill); host.appendChild(r);
  };
  bars.forEach(b => { if (!b.down) rect(b.x - 5.5, b.y, 11, RED); });
  bars.forEach((b, i) => {
    if (!b.down) return;
    const lone = bars[i - 1] && bars[i + 1] && !bars[i - 1].down && !bars[i + 1].down;
    if (!lone) rect(b.x - 2.9, b.y, 5.8, "#0f3a3b");
    rect(b.x - 1.45, b.y, 2.9, lone && b.y > 560 ? MUTED : CYAN);
  });
  rect(from - 3, BASE + 1, to - from + 3, "#701214");
}
draw("v1", 40, 1568, peaks1);
draw("v2", 1, 1530, peaks2);
```
